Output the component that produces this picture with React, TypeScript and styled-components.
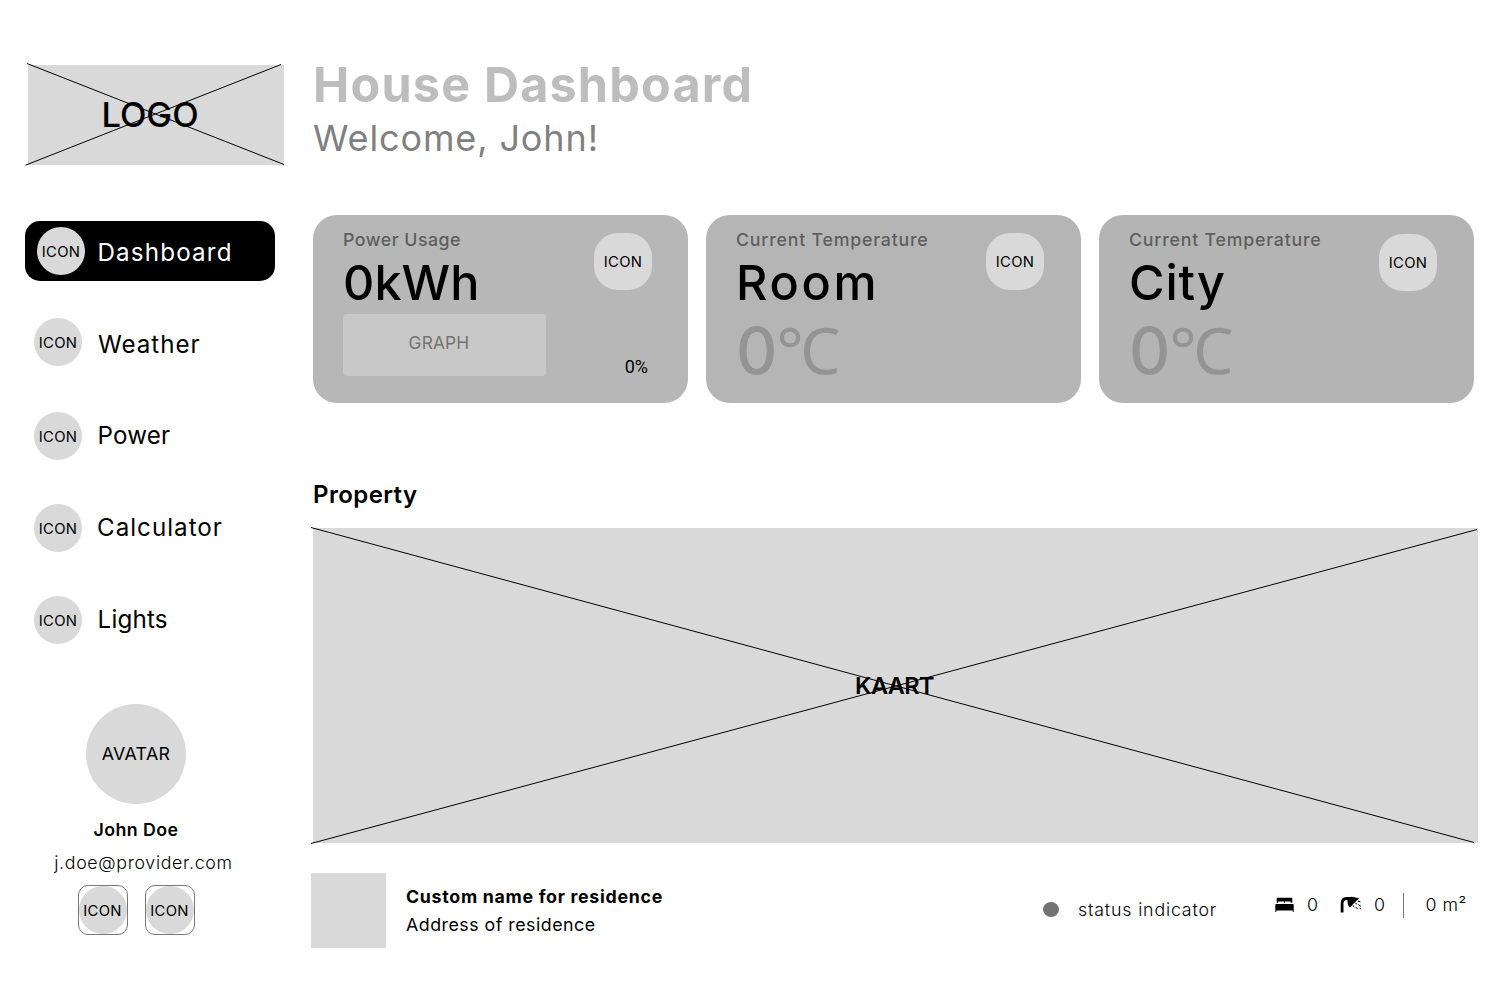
import React from 'react';
import styled, { createGlobalStyle } from 'styled-components';

const GlobalStyle = createGlobalStyle`
  * { box-sizing: border-box; }
  body {
    margin: 0;
    background: #fff;
    color: #000;
    font-family: Inter, 'Liberation Sans', sans-serif;
  }
  h1, h2, p { margin: 0; font-weight: inherit; }
`;

const Page = styled.div`
  display: grid;
  grid-template-columns: 286px 1fr;
  width: 1512px;
  height: 982px;
  overflow: hidden;
`;

const Sidebar = styled.aside`
  display: flex;
  flex-direction: column;
  padding: 65px 0 0 25px;
`;

const Main = styled.main`
  display: flex;
  flex-direction: column;
  padding: 61px 34px 0 27px;
`;

const Placeholder = styled.div`
  position: relative;
  display: flex;
  align-items: center;
  justify-content: center;
  background: #d9d9d9;
`;

const LogoBox = styled(Placeholder)`
  width: 256px;
  height: 100px;
  margin-left: 3px;
  padding: 0 12px 2px 0;
  font-size: 34.5px;
  font-weight: 500;
`;

const Cross = styled.svg`
  position: absolute;
  left: 0;
  top: 0;
  overflow: visible;
  stroke: #000;
  stroke-width: 1;
`;

const Nav = styled.nav`
  display: flex;
  flex-direction: column;
  gap: 32px;
  width: 250px;
  margin-top: 56px;
`;

const NavItem = styled.a<{ $active?: boolean }>`
  display: flex;
  align-items: flex-start;
  height: 60px;
  padding-left: ${(p) => (p.$active ? 12 : 9)}px;
  border-radius: 15px;
  background: ${(p) => (p.$active ? '#000' : 'transparent')};
  color: ${(p) => (p.$active ? '#fff' : '#000')};
`;

const IconCircle = styled.span<{ $drop?: number }>`
  display: flex;
  flex: none;
  align-items: center;
  justify-content: center;
  width: 48px;
  height: 48px;
  margin-top: ${(p) => p.$drop ?? 0}px;
  padding-top: 1px;
  border-radius: 50%;
  background: #d9d9d9;
  color: #000;
  font-size: 14.8px;
  letter-spacing: 0.3px;
`;

const NavLabel = styled.span<{ $indent: number; $drop: number; $tracking: number }>`
  margin: ${(p) => p.$drop}px 0 0 ${(p) => p.$indent}px;
  font-size: 24.2px;
  line-height: 30px;
  letter-spacing: ${(p) => p.$tracking}px;
`;

const Profile = styled.section`
  display: flex;
  flex-direction: column;
  align-items: center;
  width: 222px;
  margin-top: 55px;
`;

const Avatar = styled.div`
  display: flex;
  align-items: center;
  justify-content: center;
  width: 100px;
  height: 100px;
  padding-bottom: 2px;
  border-radius: 50%;
  background: #d9d9d9;
  font-size: 17.8px;
  letter-spacing: 0.35px;
`;

const ProfileName = styled.p`
  margin-top: 14px;
  font-size: 17.8px;
  font-weight: 600;
  line-height: 24px;
  letter-spacing: 0.42px;
`;

const ProfileEmail = styled.p`
  margin: 9px 0 0 15px;
  font-size: 17.8px;
  font-weight: 300;
  line-height: 24px;
  letter-spacing: 0.68px;
`;

const ProfileActions = styled.div`
  display: flex;
  gap: 17px;
  margin-top: 10px;
`;

const ActionButton = styled.button`
  display: flex;
  align-items: center;
  justify-content: center;
  width: 50px;
  height: 50px;
  padding: 0;
  border: 1px solid #777;
  border-radius: 10px;
  background: #fff;
  font-family: inherit;
`;

const Title = styled.h1`
  color: #bdbdbd;
  font-size: 48.5px;
  font-weight: 700;
  line-height: 48px;
  letter-spacing: 1.2px;
  white-space: nowrap;
`;

const Welcome = styled.p`
  margin-top: 9px;
  color: #808080;
  font-size: 36px;
  line-height: 40px;
  letter-spacing: 0.88px;
`;

const Cards = styled.section`
  display: grid;
  grid-template-columns: repeat(3, 375px);
  gap: 18px;
  margin-top: 57px;
`;

const Card = styled.article<{ $shade: string }>`
  display: flex;
  justify-content: space-between;
  height: 187.5px;
  padding: 15px 36px 0 30px;
  border-radius: 24px;
  background: ${(p) => p.$shade};
`;

const CardBody = styled.div`
  display: flex;
  flex-direction: column;
`;

const CardLabel = styled.p<{ $tracking: number }>`
  color: #5e5e5e;
  font-size: 17.8px;
  font-weight: 500;
  line-height: 20px;
  letter-spacing: ${(p) => p.$tracking}px;
`;

const CardTitle = styled.h2<{ $tracking: number }>`
  margin-top: 5px;
  font-size: 48.5px;
  font-weight: 500;
  line-height: 56px;
  letter-spacing: ${(p) => p.$tracking}px;
`;

const Graph = styled.div`
  display: flex;
  align-items: center;
  justify-content: center;
  width: 203px;
  height: 62px;
  margin-top: 3px;
  padding: 0 11px 6px 0;
  border-radius: 4px;
  background: #c8c8c8;
  color: #737373;
  font-size: 17.3px;
  letter-spacing: 0.2px;
`;

const Reading = styled.p`
  display: flex;
  align-items: baseline;
  margin: 15px 0 0;
  color: #949494;
  font-size: 64px;
  font-weight: 550;
  line-height: 48px;
`;

const Unit = styled.span`
  margin-left: -1px;
  font-family: 'Noto Sans', sans-serif;
  font-weight: 400;
`;

const CardAside = styled.div<{ $drop: number; $pull: number }>`
  display: flex;
  flex-direction: column;
  align-items: flex-end;
  margin: ${(p) => p.$drop}px ${(p) => p.$pull}px 0 0;
`;

const IconTile = styled.span`
  display: flex;
  align-items: center;
  justify-content: center;
  width: 58px;
  height: 57px;
  border-radius: 24px;
  background: #d9d9d9;
  font-size: 14.8px;
  letter-spacing: 0.3px;
`;

const Percent = styled.span`
  margin: 65px 4px 0 0;
  font-family: Roboto, sans-serif;
  font-size: 18px;
  line-height: 24px;
`;

const SectionTitle = styled.h2`
  margin-top: 77.5px;
  font-size: 24px;
  font-weight: 600;
  line-height: 30px;
  letter-spacing: 0.4px;
`;

const MapBox = styled(Placeholder)`
  width: 1165px;
  height: 315px;
  margin-top: 18px;
  padding-right: 2px;
  font-size: 23.5px;
  font-weight: 600;
  letter-spacing: -0.6px;
`;

const Residence = styled.footer`
  display: flex;
  align-items: flex-start;
  margin: 30px 0 0 -2px;
`;

const Thumbnail = styled.div`
  width: 75px;
  height: 75px;
  background: #d9d9d9;
`;

const ResidenceText = styled.div`
  width: 637px;
  margin: 12px 0 0 20px;
  font-size: 17.8px;
  line-height: 24px;
`;

const ResidenceName = styled.p`
  font-weight: 700;
  letter-spacing: 0.7px;
`;

const ResidenceAddress = styled.p`
  margin-top: 4px;
  letter-spacing: 0.5px;
`;

const Status = styled.div`
  display: flex;
  align-items: center;
  gap: 19px;
  width: 232px;
  margin-top: 25px;
  font-size: 17.8px;
  font-weight: 300;
  line-height: 24px;
  letter-spacing: 0.83px;
`;

const StatusDot = styled.span`
  width: 16px;
  height: 15px;
  margin-bottom: 1px;
  border-radius: 50%;
  background: #737373;
`;

const Facts = styled.div`
  display: flex;
  align-items: center;
  height: 25px;
  margin-top: 20px;
  font-size: 17.8px;
  font-weight: 300;
  line-height: 23px;
`;

const Fact = styled.span<{ $gap: number; $after: number }>`
  display: flex;
  align-items: center;
  gap: ${(p) => p.$gap}px;
  margin: 0 ${(p) => p.$after}px 2px 0;
`;

const Area = styled.span`
  margin: 0 0 2px 21px;
  letter-spacing: 0.5px;
`;

const Divider = styled.span`
  width: 1.5px;
  height: 25px;
  background: #777;
`;

const navItems = [
  { label: 'Dashboard', active: true, circle: 6, drop: 16.5, indent: 12.5, tracking: 1.15 },
  { label: 'Weather', circle: 5, drop: 16.5, indent: 16, tracking: 0.95 },
  { label: 'Power', circle: 7, drop: 15.5, indent: 15.5, tracking: 0.15 },
  { label: 'Calculator', circle: 7, drop: 15.5, indent: 15, tracking: 1 },
  { label: 'Lights', circle: 7, drop: 15.5, indent: 15.5, tracking: 0.2 },
];

const BedIcon = () => (
  <svg width="19" height="16" viewBox="0 0 19 16">
    <path d="M2.6 .7h13.8q.9 0 .9.9v4.1h-1.7V4.6H10v1.1H9V4.6H3.2v1.1H1.7V1.6q0-.9.9-.9z" />
    <path d="M1 7h17q.7 0 .7.7V15h-1v-1.5H1.3V15H.3V7.7Q.3 7 1 7z" />
  </svg>
);

const ShowerIcon = () => (
  <svg width="23" height="18" viewBox="0 0 23 18">
    <path d="M2.1 16.5V7.4Q2.1 2.9 6.6 2.5H10" fill="none" stroke="#000" strokeWidth="2.8" />
    <path d="M7.4 2.4Q9.8 .2 13.4 1.1 16 1.9 19.2 2L9.8 11.4Q7.4 9 7.4 5z" />
    <path
      d="M15.6 7.2l1.2.8M18.2 5.2l1.8.5M13.2 9.6l.7 1.3M18.6 8.8l2 1.2M16 11.2l1.3 1.6M20 12.4l.8.6"
      stroke="#000"
      strokeWidth="1"
      strokeLinecap="round"
    />
  </svg>
);

export default function App() {
  return (
    <>
      <GlobalStyle />
      <Page>
        <Sidebar>
          <LogoBox>
            LOGO
            <Cross width="256" height="100">
              <line x1="-1" y1="-1.5" x2="256" y2="99.5" />
              <line x1="-2.5" y1="100.2" x2="253" y2="-0.5" />
            </Cross>
          </LogoBox>
          <Nav>
            {navItems.map((item) => (
              <NavItem key={item.label} $active={item.active}>
                <IconCircle $drop={item.circle}>ICON</IconCircle>
                <NavLabel $indent={item.indent} $drop={item.drop} $tracking={item.tracking}>
                  {item.label}
                </NavLabel>
              </NavItem>
            ))}
          </Nav>
          <Profile>
            <Avatar>AVATAR</Avatar>
            <ProfileName>John Doe</ProfileName>
            <ProfileEmail>j.doe@provider.com</ProfileEmail>
            <ProfileActions>
              <ActionButton><IconCircle>ICON</IconCircle></ActionButton>
              <ActionButton><IconCircle>ICON</IconCircle></ActionButton>
            </ProfileActions>
          </Profile>
        </Sidebar>
        <Main>
          <Title>House Dashboard</Title>
          <Welcome>Welcome, John!</Welcome>
          <Cards>
            <Card $shade="#b7b7b7">
              <CardBody>
                <CardLabel $tracking={0.5}>Power Usage</CardLabel>
                <CardTitle $tracking={0.1}>0kWh</CardTitle>
                <Graph>GRAPH</Graph>
              </CardBody>
              <CardAside $drop={3} $pull={0}>
                <IconTile>ICON</IconTile>
                <Percent>0%</Percent>
              </CardAside>
            </Card>
            <Card $shade="#b5b5b5">
              <CardBody>
                <CardLabel $tracking={0.77}>Current Temperature</CardLabel>
                <CardTitle $tracking={2.7}>Room</CardTitle>
                <Reading>0<Unit>℃</Unit></Reading>
              </CardBody>
              <CardAside $drop={3} $pull={1}>
                <IconTile>ICON</IconTile>
              </CardAside>
            </Card>
            <Card $shade="#b4b4b4">
              <CardBody>
                <CardLabel $tracking={0.77}>Current Temperature</CardLabel>
                <CardTitle $tracking={0.9}>City</CardTitle>
                <Reading>0<Unit>℃</Unit></Reading>
              </CardBody>
              <CardAside $drop={4} $pull={1}>
                <IconTile>ICON</IconTile>
              </CardAside>
            </Card>
          </Cards>
          <SectionTitle>Property</SectionTitle>
          <MapBox>
            KAART
            <Cross width="1165" height="315">
              <line x1="-2" y1="-0.5" x2="1161" y2="314.5" />
              <line x1="-2" y1="315.5" x2="1164" y2="1.5" />
            </Cross>
          </MapBox>
          <Residence>
            <Thumbnail />
            <ResidenceText>
              <ResidenceName>Custom name for residence</ResidenceName>
              <ResidenceAddress>Address of residence</ResidenceAddress>
            </ResidenceText>
            <Status>
              <StatusDot />
              status indicator
            </Status>
            <Facts>
              <Fact $gap={13} $after={22}><BedIcon />0</Fact>
              <Fact $gap={11} $after={18}><ShowerIcon />0</Fact>
              <Divider />
              <Area>0 m²</Area>
            </Facts>
          </Residence>
        </Main>
      </Page>
    </>
  );
}
